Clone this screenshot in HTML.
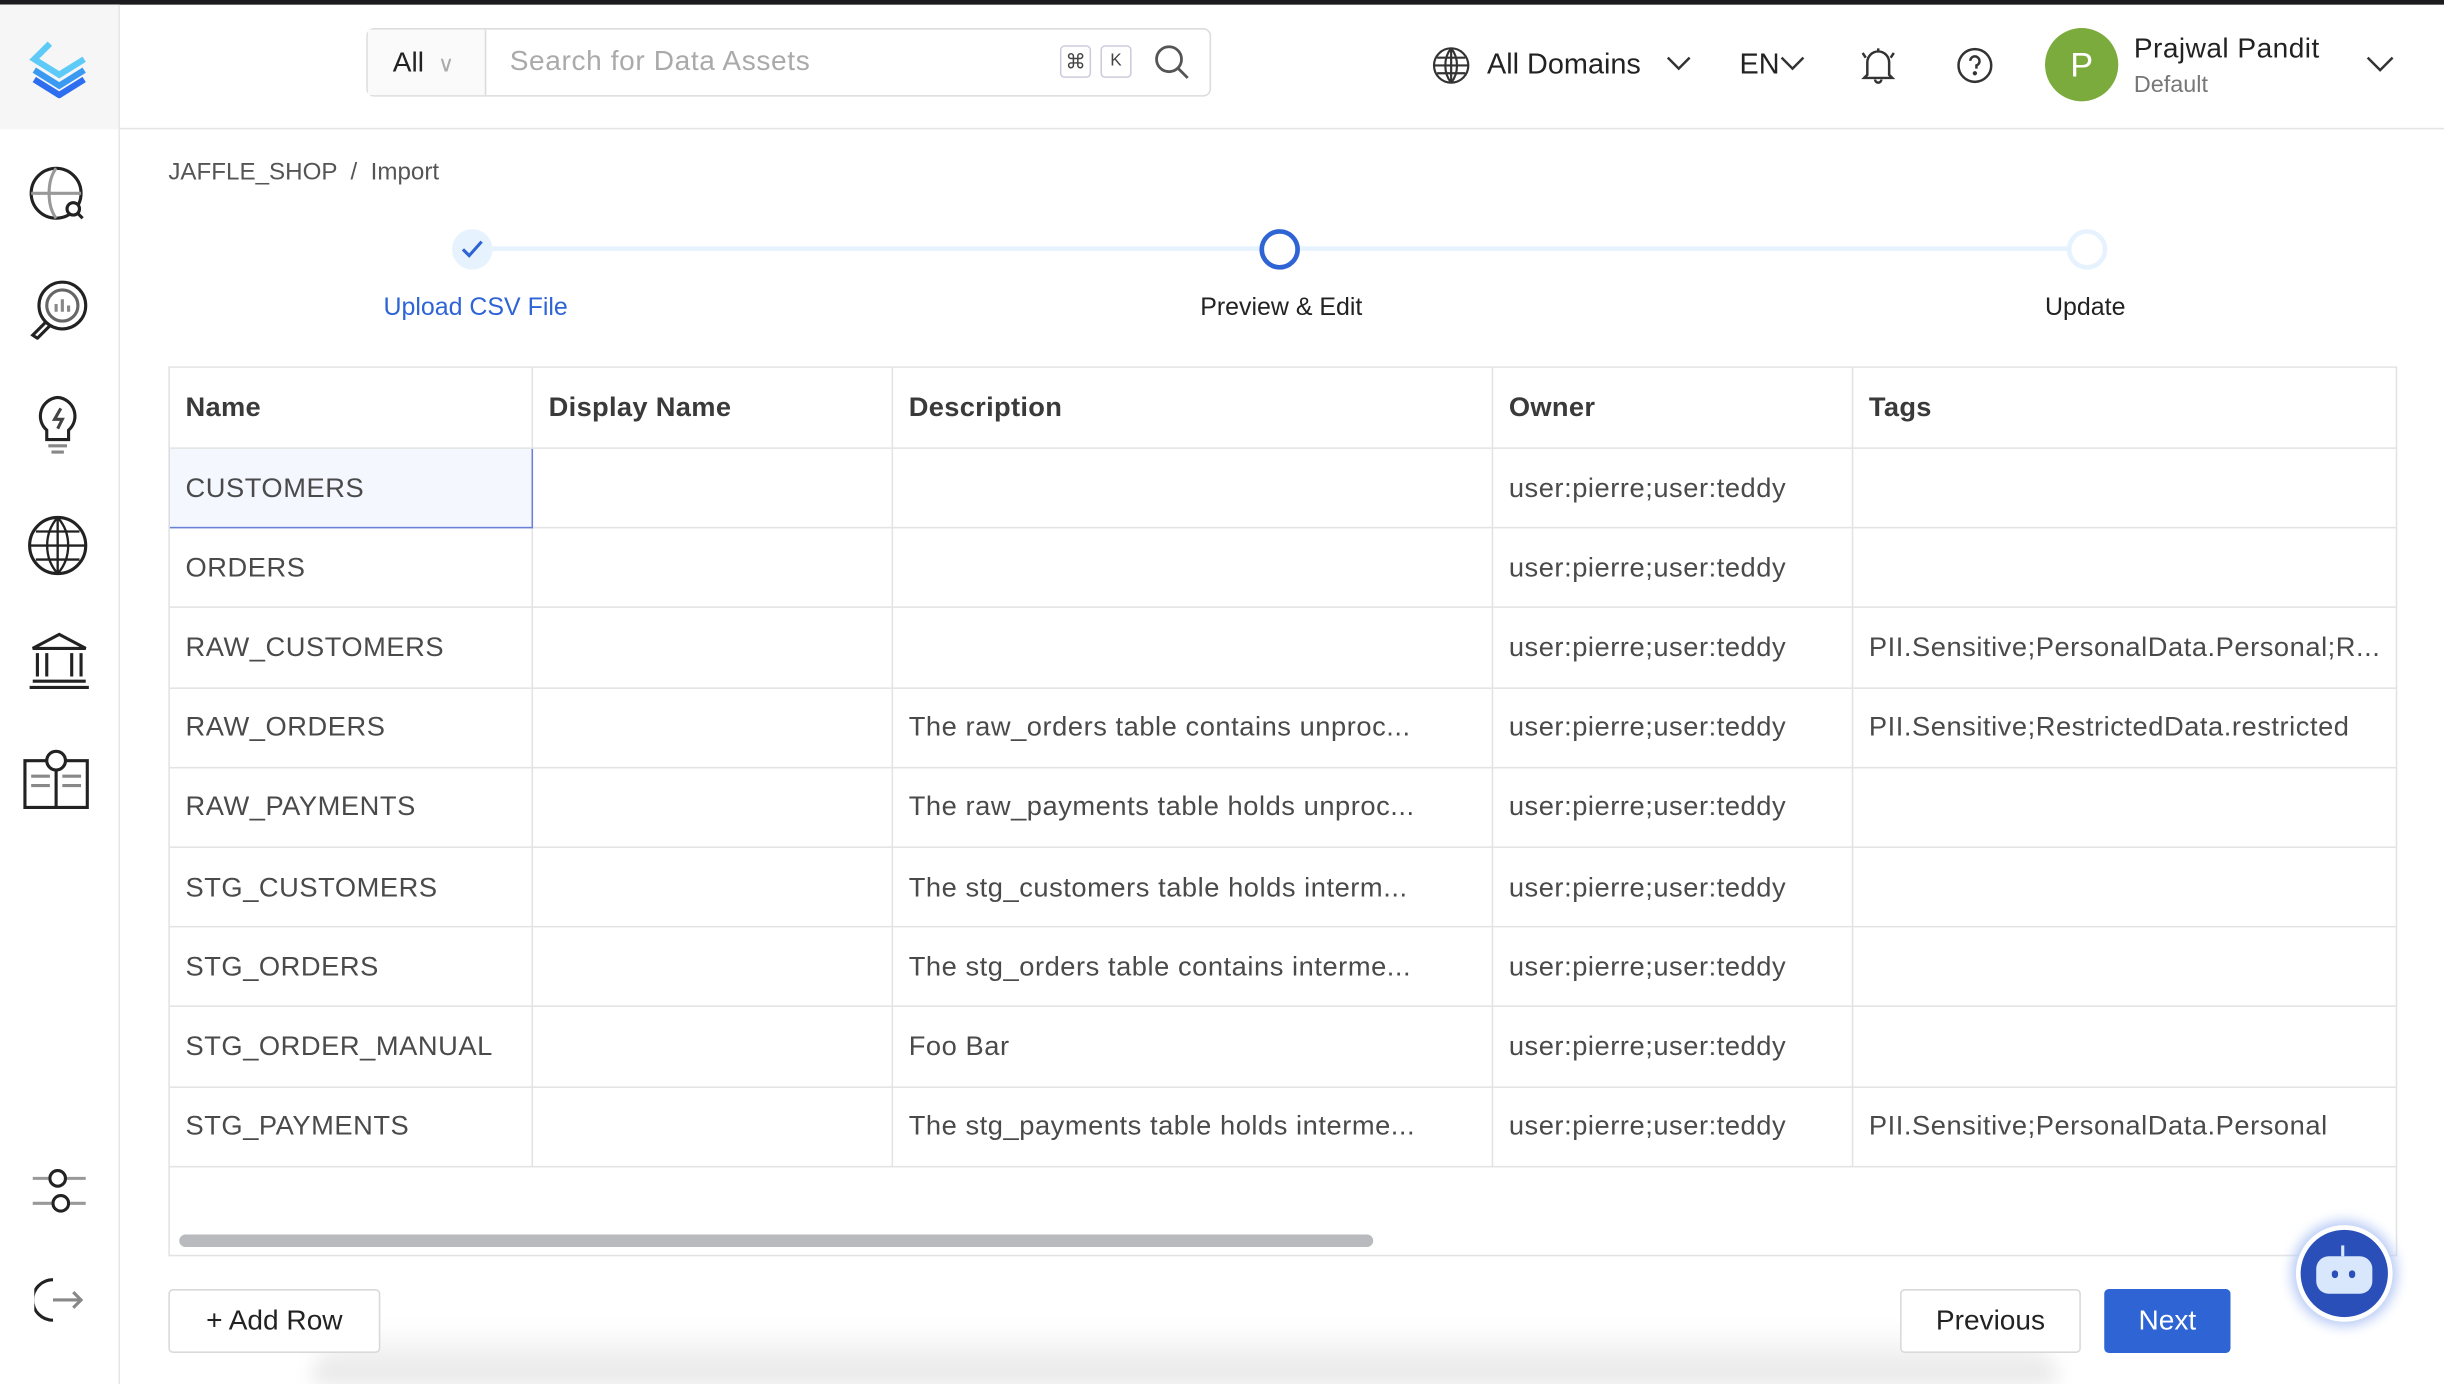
<!DOCTYPE html>
<html><head><meta charset="utf-8"><style>
*{box-sizing:border-box;margin:0;padding:0}
html,body{width:2444px;height:1384px;overflow:hidden;background:#fff}
#w{width:1568px;height:888px;transform:scale(1.5587);transform-origin:0 0;position:relative;font-family:"Liberation Sans",sans-serif;color:#222;background:#fff}
.a{position:absolute}
.topbar{left:0;top:0;width:1568px;height:3px;background:#1c1c1e}
.side{left:0;top:3px;width:77px;height:885px;border-right:1px solid #e6e6e6;background:#fff}
.logo{left:0;top:3px;width:76px;height:80px;background:#f6f6f6}
.hdr{left:77px;top:82px;width:1491px;height:1px;background:#e4e4e4}
table{border-collapse:collapse;font-size:17.5px;letter-spacing:0.35px}
td,th{border:1px solid #e3e3e3;height:51.2px;padding:0 10px;text-align:left;white-space:nowrap;overflow:hidden;color:#4a4a4a}
th{color:#3a3a3a;font-weight:bold;height:52px;letter-spacing:0.2px}
.btn{border:1px solid #d9d9d9;border-radius:3px;font-size:18px;display:flex;align-items:center;justify-content:center;background:#fff}
</style></head><body><div id="w">
<div class="a topbar"></div>
<div class="a side"></div>
<div class="a logo"></div>
<svg class="a" style="left:18px;top:25px" width="40" height="38" viewBox="0 0 40 38" fill="none" stroke-width="4" stroke-linejoin="miter">
<path d="M14 3 L4 13 L20 23 L36 13" stroke="#5ecaf7"/><path d="M4 20 L20 30 L36 20" stroke="#3a9af2"/><path d="M4 26 L20 36 L36 26" stroke="#2d6ef0"/></svg>
<svg class="a" style="left:18px;top:106px" width="40" height="38" fill="none" stroke="#222" stroke-width="2"><circle cx="18" cy="18" r="16"/><path d="M2 18h32M18 2c-6 8-6 24 0 32" stroke="#999"/><circle cx="29" cy="28" r="4" stroke="#222" fill="#fff"/><path d="M32 31l3 3"/></svg>
<svg class="a" style="left:18px;top:178px" width="40" height="40" fill="none" stroke="#222" stroke-width="2"><circle cx="22" cy="18" r="15"/><circle cx="22" cy="18" r="10" stroke="#666"/><path d="M18 22v-5M22 22v-8M26 22v-4" stroke="#888"/><path d="M12 28l-9 9 3 2 8-8"/></svg>
<svg class="a" style="left:20px;top:252px" width="36" height="42" fill="none" stroke="#222" stroke-width="2"><path d="M17 3a12 12 0 0 0-7 21v6h14v-6a12 12 0 0 0-7-21z"/><path d="M19 10l-4 7h5l-3 6" stroke="#444"/><path d="M11 34h12M13 38h8" stroke="#888"/></svg>
<svg class="a" style="left:17px;top:330px" width="42" height="42" fill="none" stroke="#222" stroke-width="2"><circle cx="20" cy="20" r="18"/><path d="M2 20h36M20 2v36M6 11h28M6 29h28M20 2c-9 10-9 26 0 36M20 2c9 10 9 26 0 36" stroke-width="1.5"/></svg>
<svg class="a" style="left:18px;top:404px" width="42" height="38" fill="none" stroke="#222" stroke-width="2"><path d="M3 12L20 3l17 9zM3 12h34M6 15v15M12 15v15M28 15v15M34 15v15M3 33h34M1 37h38"/></svg>
<svg class="a" style="left:14px;top:478px" width="46" height="42" fill="none" stroke="#222" stroke-width="2"><path d="M2 10h20v30H2zM22 10h20v30H22z"/><circle cx="22" cy="10" r="6" fill="#fff"/><path d="M6 20h12M6 26h12M26 20h12M26 26h12" stroke="#888"/></svg>
<svg class="a" style="left:19px;top:746px" width="38" height="36" fill="none" stroke="#222" stroke-width="2"><path d="M2 10h10M24 10h12M2 26h12M26 26h10" stroke="#999"/><circle cx="18" cy="10" r="5"/><circle cx="20" cy="26" r="5"/></svg>
<svg class="a" style="left:22px;top:818px" width="34" height="32" fill="none" stroke="#222" stroke-width="2"><path d="M12 3a13 13 0 0 0 0 26"/><path d="M12 16h18M25 11l5 5-5 5" stroke="#888"/></svg>
<div class="a hdr"></div>
<div class="a" style="left:235px;top:18px;width:542px;height:44px;border:1px solid #dcdcdc;border-radius:5px"></div>
<div class="a" style="left:236px;top:19px;width:76px;height:42px;background:#fafafa;border-right:1px solid #dcdcdc;font-size:18px;line-height:42px;padding-left:16px">All <span style="color:#aaa;font-size:14px;margin-left:4px">&#8744;</span></div>
<div class="a" style="left:327px;top:29px;font-size:18px;color:#aaa;letter-spacing:0.4px">Search for Data Assets</div>
<div class="a" style="left:680px;top:29px;width:20px;height:21px;border:1px solid #ccd;border-radius:3px;font-size:13px;text-align:center;line-height:19px;color:#444">&#8984;</div>
<div class="a" style="left:706px;top:29px;width:20px;height:21px;border:1px solid #ccd;border-radius:3px;font-size:11px;text-align:center;line-height:19px;color:#444">K</div>
<svg class="a" style="left:740px;top:28px" width="24" height="24" fill="none" stroke="#555" stroke-width="1.8"><circle cx="10" cy="10" r="8"/><path d="M16 16l6 6"/></svg>
<svg class="a" style="left:918px;top:29px" width="26" height="26" fill="none" stroke="#333" stroke-width="1.4"><circle cx="13" cy="13" r="11"/><path d="M2 13h22M13 2v22M4 8h18M4 18h18M13 2c-5 6-5 16 0 22M13 2c5 6 5 16 0 22"/></svg>
<div class="a" style="left:954px;top:30px;font-size:18.5px">All Domains</div>
<svg class="a" style="left:1069px;top:36px" width="16" height="10" fill="none" stroke="#333" stroke-width="1.6"><path d="M1 1l7 7 7-7"/></svg>
<div class="a" style="left:1116px;top:30px;font-size:18.5px">EN</div>
<svg class="a" style="left:1142px;top:36px" width="16" height="10" fill="none" stroke="#333" stroke-width="1.6"><path d="M1 1l7 7 7-7"/></svg>
<svg class="a" style="left:1192px;top:28px" width="26" height="28" fill="none" stroke="#333" stroke-width="1.6"><path d="M6 20V12a7 7 0 0 1 14 0v8l2 2H4zM11 23a2 2 0 0 0 4 0M13 3v2M3 6l2 3M23 6l-2 3"/></svg>
<svg class="a" style="left:1254px;top:29px" width="26" height="26" fill="none" stroke="#333" stroke-width="1.6"><circle cx="13" cy="13" r="10.5"/><path d="M10 10a3 3 0 1 1 4 3v2"/><circle cx="13" cy="18" r=".6" fill="#333"/></svg>
<div class="a" style="left:1312px;top:18px;width:47px;height:47px;border-radius:50%;background:#7bab3c;color:#fff;font-size:22px;text-align:center;line-height:47px">P</div>
<div class="a" style="left:1369px;top:21px;font-size:18px;color:#222;letter-spacing:0.3px">Prajwal Pandit</div>
<div class="a" style="left:1369px;top:46px;font-size:15px;color:#777">Default</div>
<svg class="a" style="left:1518px;top:36px" width="18" height="11" fill="none" stroke="#333" stroke-width="1.6"><path d="M1 1l8 8 8-8"/></svg>
<div class="a" style="left:108px;top:102px;font-size:15.5px;color:#555">JAFFLE_SHOP &nbsp;/&nbsp; Import</div>
<div class="a" style="left:315px;top:158px;width:1012px;height:3px;background:#e6f3fe"></div>
<div class="a" style="left:290px;top:147px;width:26px;height:26px;border-radius:50%;background:#e6f3fe"></div>
<svg class="a" style="left:296px;top:154px" width="14" height="12" fill="none" stroke="#2e64d4" stroke-width="2"><path d="M1 6l4 4 8-9"/></svg>
<div class="a" style="left:808px;top:147px;width:26px;height:26px;border-radius:50%;border:3.5px solid #2e64d4;background:#fff"></div>
<div class="a" style="left:1326px;top:147px;width:26px;height:26px;border-radius:50%;border:3px solid #e6f3fe;background:#fff"></div>
<div class="a" style="left:246px;top:189px;font-size:16px;color:#2e64d4">Upload CSV File</div>
<div class="a" style="left:770px;top:189px;font-size:16px">Preview &amp; Edit</div>
<div class="a" style="left:1312px;top:189px;font-size:16px">Update</div>
<div class="a" style="left:108px;top:235px;width:1430px;height:571px;border:1px solid #e3e3e3;border-top:none;overflow:hidden">
<table style="width:1430px;table-layout:fixed;margin-left:-1px">
<colgroup><col style="width:233px"><col style="width:231px"><col style="width:385px"><col style="width:231px"><col style="width:351px"></colgroup>
<tr><th>Name</th><th>Display Name</th><th>Description</th><th>Owner</th><th>Tags</th></tr>
<tr><td style="border:1.5px solid #6a7fd8;background:#f5f7ff">CUSTOMERS</td><td></td><td></td><td>user:pierre;user:teddy</td><td></td></tr>
<tr><td>ORDERS</td><td></td><td></td><td>user:pierre;user:teddy</td><td></td></tr>
<tr><td>RAW_CUSTOMERS</td><td></td><td></td><td>user:pierre;user:teddy</td><td>PII.Sensitive;PersonalData.Personal;R...</td></tr>
<tr><td>RAW_ORDERS</td><td></td><td>The raw_orders table contains unproc...</td><td>user:pierre;user:teddy</td><td>PII.Sensitive;RestrictedData.restricted</td></tr>
<tr><td>RAW_PAYMENTS</td><td></td><td>The raw_payments table holds unproc...</td><td>user:pierre;user:teddy</td><td></td></tr>
<tr><td>STG_CUSTOMERS</td><td></td><td>The stg_customers table holds interm...</td><td>user:pierre;user:teddy</td><td></td></tr>
<tr><td>STG_ORDERS</td><td></td><td>The stg_orders table contains interme...</td><td>user:pierre;user:teddy</td><td></td></tr>
<tr><td>STG_ORDER_MANUAL</td><td></td><td>Foo Bar</td><td>user:pierre;user:teddy</td><td></td></tr>
<tr><td>STG_PAYMENTS</td><td></td><td>The stg_payments table holds interme...</td><td>user:pierre;user:teddy</td><td>PII.Sensitive;PersonalData.Personal</td></tr>
</table>
<div class="a" style="left:6px;top:557px;width:766px;height:8px;border-radius:4px;background:#b9babd"></div>
</div>
<div class="a" style="left:200px;top:850px;width:1120px;height:38px;background:linear-gradient(#fff,#e4e4e4);border-radius:40px 40px 0 0;filter:blur(6px)"></div>
<div class="a btn" style="left:108px;top:827px;width:136px;height:41px">+ Add Row</div>
<div class="a btn" style="left:1219px;top:827px;width:116px;height:41px">Previous</div>
<div class="a btn" style="left:1350px;top:827px;width:81px;height:41px;background:#2e64d4;border-color:#2e64d4;color:#fff">Next</div>
<div class="a" style="left:1473px;top:786px;width:62px;height:62px;border-radius:50%;background:#2a4fb8;border:3px solid #fff;box-shadow:0 0 8px 3px #b8cbf5"></div>
<div class="a" style="left:1486px;top:806px;width:36px;height:24px;border-radius:8px;background:#d8e7fb"></div>
<div class="a" style="left:1496px;top:815px;width:4px;height:5px;border-radius:2px;background:#2a4fb8"></div>
<div class="a" style="left:1507px;top:815px;width:4px;height:5px;border-radius:2px;background:#2a4fb8"></div>
<div class="a" style="left:1502px;top:799px;width:2px;height:7px;background:#d8e7fb"></div>
</div></body></html>
